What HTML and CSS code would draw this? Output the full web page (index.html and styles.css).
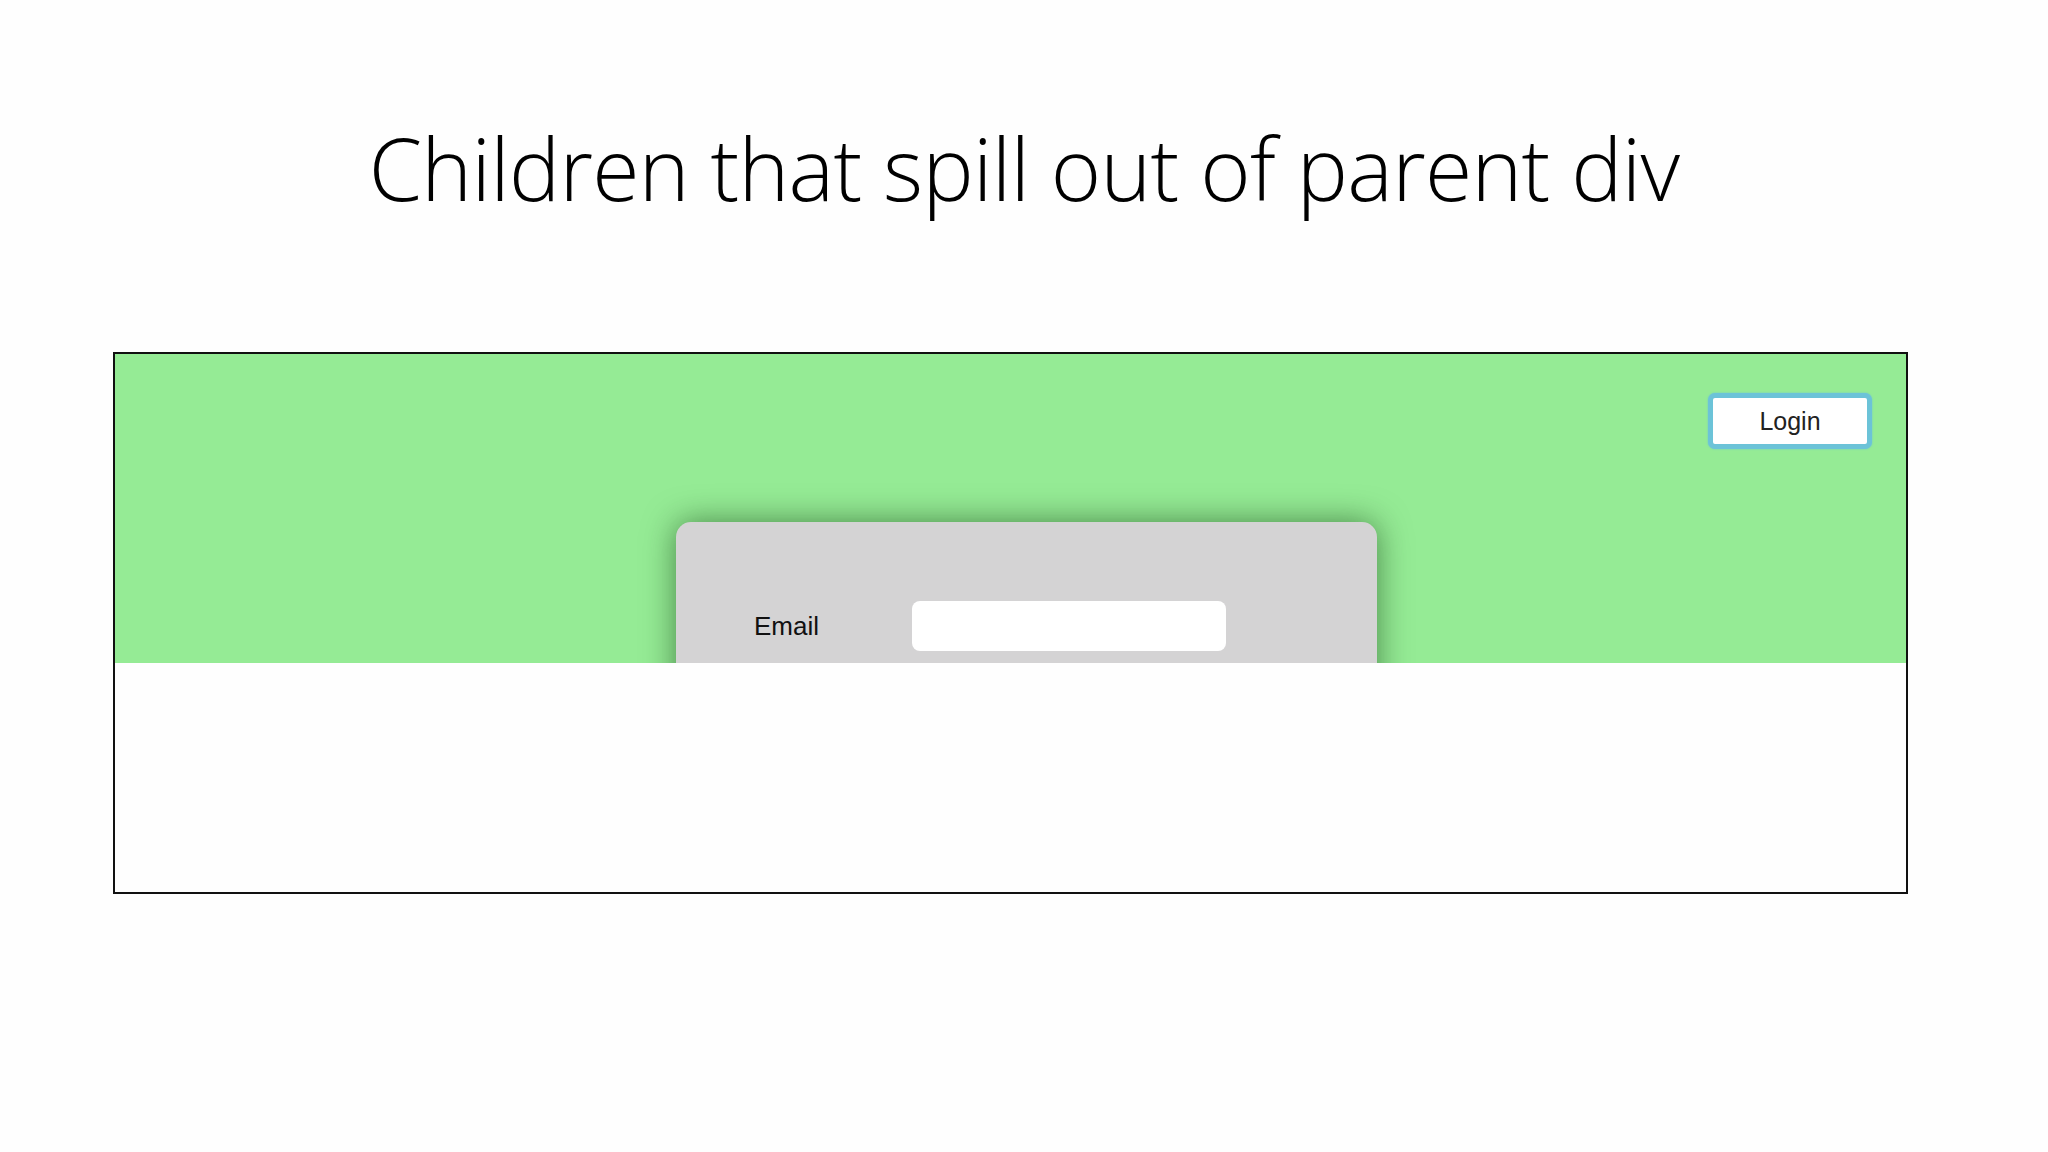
FILE: index.html
```html
<!DOCTYPE html>
<html lang="en">
<head>
    <meta charset="UTF-8">
    <meta name="viewport" content="width=device-width, initial-scale=1.0">
    <title>Children that spill out of parent div</title>
    <link rel="stylesheet" href="styles.css">
</head>
<body>
    <div class="slide">
        <h1 class="slide-title">Children that spill out of parent div</h1>

        <div class="demo-frame">
            <div class="hero">
                <button class="login-button">Login</button>
                <div class="login-card">
                    <div class="field-row">
                        <label class="field-label" for="email">Email</label>
                        <input class="field-input" id="email" type="text">
                    </div>
                </div>
            </div>
            <div class="below"></div>
        </div>
    </div>
</body>
</html>
```

FILE: styles.css
```css
body {
    margin: 0;
    padding: 0;
    background-color: #fefefe;
    font-family: "Open Sans", sans-serif;
}
.slide {
    width: 2048px;
    height: 1152px;
    overflow: hidden;
}
.slide-title {
    margin: 0;
    padding-top: 118px;
    height: 352px;
    box-sizing: border-box;
    text-align: center;
    font-weight: 300;
    font-size: 86px;
    line-height: 100px;
    color: #000;
    letter-spacing: -0.7px;
}
.demo-frame {
    margin-left: 113px;
    width: 1795px;
    border: 2px solid #111;
    box-sizing: border-box;
    background-color: #fefefe;
}
.hero {
    height: 309px;
    background-color: #95eb95;
    overflow: hidden;
    display: flex;
    flex-direction: column;
}
.login-button {
    align-self: flex-end;
    flex-shrink: 0;
    margin: 39px 34px 0 0;
    width: 164px;
    height: 56px;
    box-sizing: border-box;
    background-color: #fff;
    border: 5px solid #6cc3d8;
    border-radius: 7px;
    box-shadow: 0 0 2px #6cc3d8;
    font-family: "Liberation Sans", Arial, sans-serif;
    font-size: 25px;
    color: #222;
    padding: 0;
}
.login-card {
    margin: 73px 0 0 561px;
    width: 701px;
    height: 320px;
    flex-shrink: 0;
    box-sizing: border-box;
    background-color: #d4d3d4;
    border-radius: 15px;
    box-shadow: 0 0 32px rgba(30, 80, 30, 0.65);
    padding: 79px 0 0 78px;
}
.field-row {
    display: flex;
    align-items: center;
}
.field-label {
    width: 158px;
    font-family: "Liberation Sans", Arial, sans-serif;
    font-size: 26px;
    color: #111;
}
.field-input {
    width: 314px;
    height: 50px;
    box-sizing: border-box;
    border: none;
    border-radius: 8px;
    background-color: #fff;
    outline: none;
}
.below {
    height: 229px;
}
```
